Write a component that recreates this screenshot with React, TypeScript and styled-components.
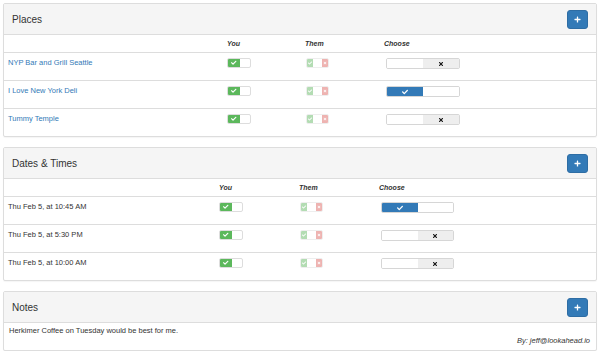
import React, { FC } from "react";
import styled, { createGlobalStyle } from "styled-components";
import { FaCheck, FaTimes, FaPlus } from "react-icons/fa";

const GlobalStyle = createGlobalStyle`
  html, body {
    margin: 0;
    padding: 0;
    background: #ffffff;
  }
  body {
    font-family: "Liberation Sans", Arial, sans-serif;
    color: #333333;
  }
`;

const Colors = {
  BORDER: "#dddddd",
  HEADING_BG: "#f5f5f5",
  PRIMARY: "#337ab7",
  SUCCESS: "#5cb85c",
  LINK: "#337ab7",
  TEXT: "#333333",
};

const Page = styled.div`
  padding: 3px 3px 0 3px;
  display: flex;
  flex-direction: column;
  gap: 10px;
`;

const Panel = styled.section`
  border: 1px solid ${Colors.BORDER};
  border-radius: 2px;
  background: #ffffff;
  box-shadow: 0 1px 1px rgba(0, 0, 0, 0.04);
  overflow: hidden;
`;

const PanelHeading = styled.header`
  height: 30px;
  display: flex;
  align-items: center;
  justify-content: space-between;
  padding: 0 8px 0 8px;
  background: ${Colors.HEADING_BG};
  border-bottom: 1px solid ${Colors.BORDER};
`;

const PanelTitle = styled.h3`
  margin: 0;
  font-size: 10px;
  font-weight: normal;
  color: ${Colors.TEXT};
`;

const AddButton = styled.button`
  width: 21px;
  height: 19px;
  padding: 0;
  border: 1px solid #2e6da4;
  border-radius: 3px;
  background: ${Colors.PRIMARY};
  color: #ffffff;
  display: flex;
  align-items: center;
  justify-content: center;
  font-size: 7px;
`;

interface IGridProps {
  columns: string;
}

const HeaderRow = styled.div<IGridProps>`
  display: grid;
  grid-template-columns: ${(p) => p.columns};
  height: 17px;
  align-items: center;
`;

const HeaderCell = styled.div`
  padding: 0 4px;
  font-size: 7px;
  font-weight: bold;
  font-style: italic;
  color: ${Colors.TEXT};
`;

const Row = styled.div<IGridProps>`
  display: grid;
  grid-template-columns: ${(p) => p.columns};
  height: 27px;
  border-top: 1px solid ${Colors.BORDER};
`;

const Cell = styled.div<{ shift?: number }>`
  padding: 5px 4px 0 ${(p) => 4 + (p.shift || 0)}px;
  font-size: 7.5px;
  line-height: 10px;
`;

const Label = styled.span<{ link?: boolean }>`
  color: ${(p) => (p.link ? Colors.LINK : Colors.TEXT)};
  font-size: 7.5px;
`;

/* "You" toggle: green check on the left, empty white on the right */
const YouToggle = styled.div`
  width: 24px;
  height: 10px;
  display: flex;
  border: 1px solid ${Colors.BORDER};
  border-radius: 2px;
  box-sizing: border-box;
  overflow: hidden;
  background: #ffffff;
`;

const YouOn = styled.div`
  width: 12px;
  background: ${Colors.SUCCESS};
  color: #ffffff;
  display: flex;
  align-items: center;
  justify-content: center;
  font-size: 5.5px;
`;

/* "Them" toggle: faded yes / no ends */
const ThemToggle = styled.div`
  width: 23px;
  height: 10px;
  display: flex;
  justify-content: space-between;
  border: 1px solid #eeeeee;
  border-radius: 2px;
  box-sizing: border-box;
  overflow: hidden;
  background: #ffffff;
`;

const ThemEnd = styled.div<{ tone: "yes" | "no" }>`
  width: 6px;
  background: ${(p) => (p.tone === "yes" ? "#b3dcb3" : "#eeb3b1")};
  color: #ffffff;
  display: flex;
  align-items: center;
  justify-content: center;
  font-size: 4px;
`;

/* "Choose" switch */
const ChooseToggle = styled.div<{ width: number }>`
  width: ${(p) => p.width}px;
  height: 11px;
  display: flex;
  border: 1px solid #d6d6d6;
  border-radius: 2px;
  box-sizing: border-box;
  overflow: hidden;
  background: #ffffff;
`;

const ChooseHalf = styled.div<{ variant: "on" | "off" | "blank" }>`
  flex: 1;
  display: flex;
  align-items: center;
  justify-content: center;
  font-size: 6px;
  background: ${(p) =>
    p.variant === "on" ? Colors.PRIMARY : p.variant === "off" ? "#eeeeee" : "#ffffff"};
  color: ${(p) => (p.variant === "on" ? "#ffffff" : "#111111")};
`;

const NotesBody = styled.div`
  padding: 3px 6px 4px 5px;
  display: flex;
  flex-direction: column;
  font-size: 7.5px;
  line-height: 10px;
`;

const Signature = styled.div`
  text-align: right;
  font-style: italic;
  color: ${Colors.TEXT};
`;

interface IRowData {
  label: string;
  chosen: boolean;
}

interface IVotePanelProps {
  title: string;
  columns: string;
  rows: IRowData[];
  links?: boolean;
  chooseWidth: number;
  chooseShift: number;
}

const Choose: FC<{ chosen: boolean; width: number }> = ({ chosen, width }) => (
  <ChooseToggle width={width}>
    {chosen ? (
      <>
        <ChooseHalf variant="on">
          <FaCheck />
        </ChooseHalf>
        <ChooseHalf variant="blank" />
      </>
    ) : (
      <>
        <ChooseHalf variant="blank" />
        <ChooseHalf variant="off">
          <FaTimes />
        </ChooseHalf>
      </>
    )}
  </ChooseToggle>
);

const VotePanel: FC<IVotePanelProps> = ({
  title,
  columns,
  rows,
  links,
  chooseWidth,
  chooseShift,
}) => (
  <Panel>
    <PanelHeading>
      <PanelTitle>{title}</PanelTitle>
      <AddButton>
        <FaPlus />
      </AddButton>
    </PanelHeading>
    <HeaderRow columns={columns}>
      <HeaderCell />
      <HeaderCell>You</HeaderCell>
      <HeaderCell>Them</HeaderCell>
      <HeaderCell>Choose</HeaderCell>
    </HeaderRow>
    {rows.map((r) => (
      <Row columns={columns} key={r.label}>
        <Cell>
          <Label link={links}>{r.label}</Label>
        </Cell>
        <Cell shift={0}>
          <YouToggle>
            <YouOn>
              <FaCheck />
            </YouOn>
          </YouToggle>
        </Cell>
        <Cell shift={1}>
          <ThemToggle>
            <ThemEnd tone="yes">
              <FaCheck />
            </ThemEnd>
            <ThemEnd tone="no">
              <FaTimes />
            </ThemEnd>
          </ThemToggle>
        </Cell>
        <Cell shift={chooseShift}>
          <Choose chosen={r.chosen} width={chooseWidth} />
        </Cell>
      </Row>
    ))}
  </Panel>
);

const places: IRowData[] = [
  { label: "NYP Bar and Grill Seattle", chosen: false },
  { label: "I Love New York Deli", chosen: true },
  { label: "Tummy Temple", chosen: false },
];

const dates: IRowData[] = [
  { label: "Thu Feb 5, at 10:45 AM", chosen: true },
  { label: "Thu Feb 5, at 5:30 PM", chosen: false },
  { label: "Thu Feb 5, at 10:00 AM", chosen: false },
];

export default function App() {
  return (
    <>
      <GlobalStyle />
      <Page>
        <VotePanel
          title="Places"
          columns="219px 78px 79px 1fr"
          rows={places}
          links
          chooseWidth={74}
          chooseShift={2}
        />
        <VotePanel
          title="Dates & Times"
          columns="211px 80px 80px 1fr"
          rows={dates}
          chooseWidth={73}
          chooseShift={2}
        />
        <Panel>
          <PanelHeading>
            <PanelTitle>Notes</PanelTitle>
            <AddButton>
              <FaPlus />
            </AddButton>
          </PanelHeading>
          <NotesBody>
            <div>Herkimer Coffee on Tuesday would be best for me.</div>
            <Signature>By: jeff@lookahead.io</Signature>
          </NotesBody>
        </Panel>
      </Page>
    </>
  );
}
